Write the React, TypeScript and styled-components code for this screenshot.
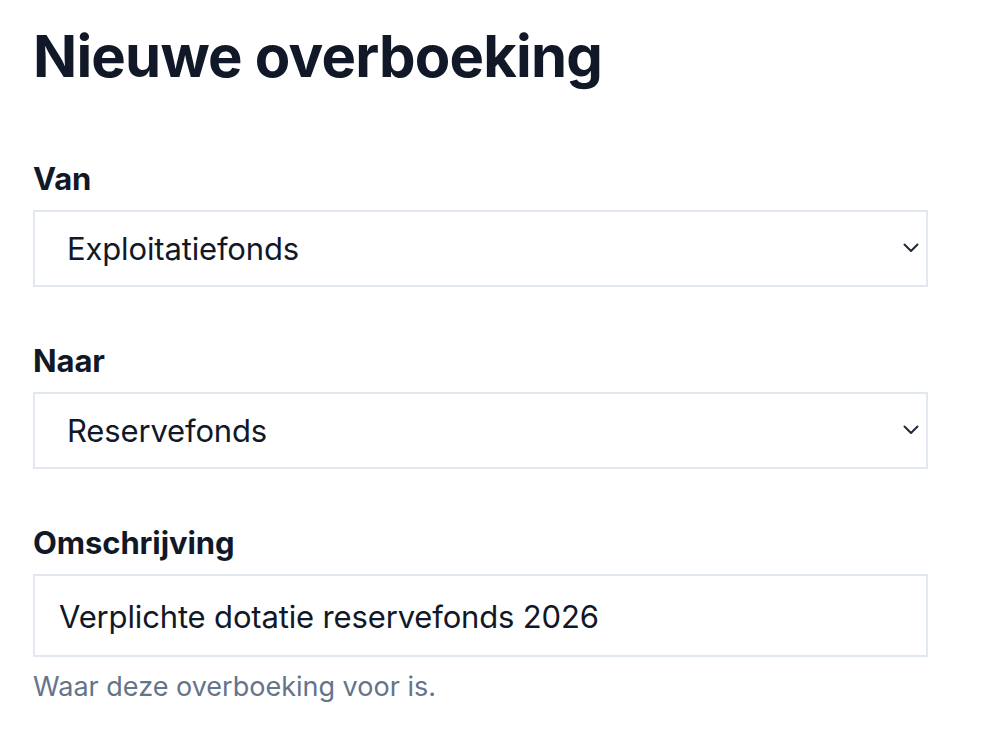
import React from 'react';
import styled, { createGlobalStyle } from 'styled-components';

const GlobalStyle = createGlobalStyle`
  html, body {
    margin: 0;
    padding: 0;
    background: #ffffff;
  }
  body {
    font-family: Inter, "Noto Sans", "Liberation Sans", sans-serif;
    color: #111827;
  }
`;

const Page = styled.main`
  width: 895px;
  padding: 20px 0 0 33px;
`;

const Title = styled.h1`
  margin: 0 0 63px;
  font-size: 58px;
  line-height: 72px;
  font-weight: 700;
  letter-spacing: -0.8px;
  color: #111827;
`;

const Form = styled.form`
  display: flex;
  flex-direction: column;
  gap: 50px;
`;

const Field = styled.div`
  display: flex;
  flex-direction: column;
`;

const Label = styled.label`
  font-size: 31px;
  line-height: 48px;
  font-weight: 700;
  letter-spacing: -0.1px;
  margin-bottom: 7px;
  color: #111827;
`;

const SelectWrap = styled.div`
  position: relative;
`;

const Select = styled.select`
  appearance: none;
  -webkit-appearance: none;
  width: 100%;
  height: 77px;
  box-sizing: border-box;
  border: 2px solid #e2e8f0;
  border-radius: 0;
  background: #ffffff;
  padding: 0 60px 0 32px;
  font-family: inherit;
  font-size: 31px;
  letter-spacing: -0.15px;
  color: #111827;
  outline: none;
`;

const Chevron = styled.svg`
  position: absolute;
  right: 9px;
  top: 33px;
  width: 16px;
  height: 10px;
  pointer-events: none;
`;

const Input = styled.input`
  width: 100%;
  height: 83px;
  box-sizing: border-box;
  border: 2px solid #e2e8f0;
  border-radius: 0;
  padding: 2px 24px 0;
  font-family: inherit;
  font-size: 31px;
  letter-spacing: -0.15px;
  color: #111827;
  outline: none;
`;

const Help = styled.p`
  margin: 10px 0 0;
  font-size: 27px;
  line-height: 40px;
  color: #64748b;
`;

type SelectFieldProps = {
  id: string;
  label: string;
  value: string;
  options: string[];
};

function SelectField({ id, label, value, options }: SelectFieldProps) {
  return (
    <Field>
      <Label htmlFor={id}>{label}</Label>
      <SelectWrap>
        <Select id={id} defaultValue={value}>
          {options.map((o) => (
            <option key={o}>{o}</option>
          ))}
        </Select>
        <Chevron viewBox="0 0 16 10" fill="none">
          <path d="M1.5 1.5 8 8l6.5-6.5" stroke="#1f2937" strokeWidth="2" strokeLinecap="round" strokeLinejoin="round" />
        </Chevron>
      </SelectWrap>
    </Field>
  );
}

const funds = ['Exploitatiefonds', 'Reservefonds'];

export default function App() {
  return (
    <>
      <GlobalStyle />
      <Page>
        <Title>Nieuwe overboeking</Title>
        <Form onSubmit={(e) => e.preventDefault()}>
          <SelectField id="van" label="Van" value="Exploitatiefonds" options={funds} />
          <SelectField id="naar" label="Naar" value="Reservefonds" options={funds} />
          <Field>
            <Label htmlFor="omschrijving">Omschrijving</Label>
            <Input id="omschrijving" defaultValue="Verplichte dotatie reservefonds 2026" />
            <Help>Waar deze overboeking voor is.</Help>
          </Field>
        </Form>
      </Page>
    </>
  );
}
